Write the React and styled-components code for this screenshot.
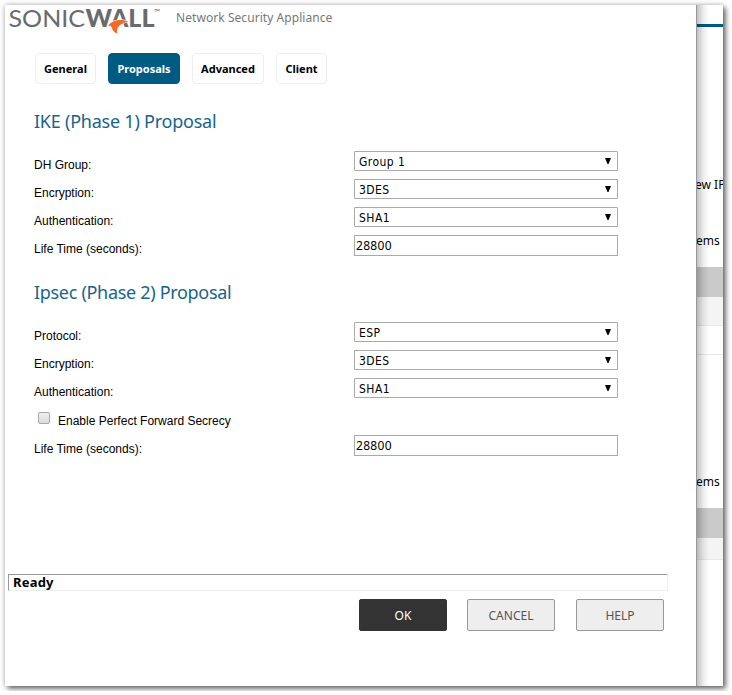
import { useState } from "react";
import styled, { createGlobalStyle } from "styled-components";

const phaseOne = [
  { label: "DH Group:", value: "Group 1" },
  { label: "Encryption:", value: "3DES" },
  { label: "Authentication:", value: "SHA1" },
];

const phaseTwo = [
  { label: "Protocol:", value: "ESP" },
  { label: "Encryption:", value: "3DES" },
  { label: "Authentication:", value: "SHA1" },
];

const tabs = [
  { name: "General", width: 61 },
  { name: "Proposals", width: 72 },
  { name: "Advanced", width: 72 },
  { name: "Client", width: 51 },
];

function Logo() {
  return (
    <LogoSvg viewBox="0 0 152 28" role="img" aria-label="SonicWall">
      <text x="-0.5" y="22" fontSize="24" textLength="76.500" lengthAdjust="spacingAndGlyphs">SONIC</text>
      <text x="76.500" y="22" fontSize="24" fontWeight="900" textLength="69" lengthAdjust="spacingAndGlyphs">WALL</text>
      <text x="145" y="9.500" fontSize="8">™</text>
      {/* orange swoosh across the A */}
      <path d="M119.500 16.500C112 13.500 103 15 99 20.800C101.500 20.300 102.500 21 102.700 22.500C103.200 25.500 105.500 27.500 108.500 28.700C106.500 22.500 111 18.500 119.500 16.500Z" fill="#f26b28" stroke="#fff" strokeWidth="1.200" paintOrder="stroke" />
    </LogoSvg>
  );
}

function SelectRow({ label, value }) {
  return (
    <Row>
      <Label>{label}</Label>
      <Select>
        <span>{value}</span>
        <Arrow viewBox="0 0 6 6"><path d="M0 0H6L3.500 6H2.500Z" /></Arrow>
      </Select>
    </Row>
  );
}

function LifeTime() {
  const [seconds, setSeconds] = useState("28800");
  return (
    <Row>
      <Label>Life Time (seconds):</Label>
      <Input value={seconds} onChange={(e) => setSeconds(e.target.value)} />
    </Row>
  );
}

function App() {
  const [active, setActive] = useState("Proposals");

  return (
    <>
      <GlobalStyle />
      <Window>
        <Dialog>
          <Header>
            <Logo />
            <Product>Network Security Appliance</Product>
          </Header>

          <TabBar>
            {tabs.map((tab) => (
              <Tab key={tab.name} $width={tab.width} $active={tab.name === active} onClick={() => setActive(tab.name)}>
                {tab.name}
              </Tab>
            ))}
          </TabBar>

          <Section>
            <Title $spacing="-0.23px">IKE (Phase 1) Proposal</Title>
            {phaseOne.map((row) => <SelectRow key={row.label} {...row} />)}
            <LifeTime />
          </Section>

          <Section>
            <Title $spacing="-0.31px">Ipsec (Phase 2) Proposal</Title>
            {phaseTwo.map((row) => <SelectRow key={row.label} {...row} />)}
            <CheckRow>
              <Checkbox />
              <span>Enable Perfect Forward Secrecy</span>
            </CheckRow>
            <LifeTime />
          </Section>

          <Status>Ready</Status>
          <Buttons>
            <Button $dark>OK</Button>
            <Button>CANCEL</Button>
            <Button>HELP</Button>
          </Buttons>
        </Dialog>

        {/* the strip of the parent page that stays visible */}
        <Parent>
          <Strip $height={19} />
          <Strip $height={3} $color="#005b82" />
          <Strip $height={148} />
          <Strip $height={20} $shift={-2}>ew IP</Strip>
          <Strip $height={36} />
          <Strip $height={20} $shift={-1}>ems</Strip>
          <Strip $height={16} />
          <Strip $height={30} $color="#cacaca" />
          <Strip $height={29} $color="#f4f4f4" $line />
          <Strip $height={29} $line />
          <Strip $height={117} />
          <Strip $height={20} $shift={-1}>ems</Strip>
          <Strip $height={16} />
          <Strip $height={30} $color="#cacaca" />
          <Strip $height={22} $color="#f4f4f4" $line />
          <Shade />
        </Parent>
      </Window>
    </>
  );
}
export default App;

const GlobalStyle = createGlobalStyle`
  * {
    box-sizing: border-box;
  }
  body {
    margin: 0;
    background: #fff;
    font-family: "Noto Sans", sans-serif;
    font-size: 12px;
    color: #000;
  }
`;

const Window = styled.div`
  display: flex;
  width: 718px;
  height: 681px;
  margin: 5px;
  background: #fff;
  box-shadow: 3px 3px 5px rgba(0, 0, 0, 0.5), 0 0 5px rgba(0, 0, 0, 0.3);
`;

const Dialog = styled.main`
  width: 692px;
  flex: none;
  border-right: 1px solid #989898;
`;

const Header = styled.header`
  display: flex;
  height: 48px;
  padding-left: 4px;
`;

const LogoSvg = styled.svg`
  width: 152px;
  height: 28px;
  overflow: visible;
  fill: #696b6e;
  font-family: Lato, sans-serif;
`;

const Product = styled.div`
  margin-left: 15px;
  line-height: 25px;
  font-size: 12px;
  letter-spacing: 0.06px;
  color: #777;
  white-space: nowrap;
`;

const TabBar = styled.nav`
  display: flex;
  gap: 12px;
  height: 31px;
  padding-left: 30px;
`;

const Tab = styled.button`
  width: ${(p) => p.$width}px;
  padding: 0;
  border: 1px solid ${(p) => (p.$active ? "#005b82" : "#eee")};
  border-radius: 4px;
  background: ${(p) => (p.$active ? "#005b82" : "#fff")};
  color: ${(p) => (p.$active ? "#fff" : "#000")};
  font: bold 11px "Noto Sans", sans-serif;
`;

const Section = styled.section`
  padding-left: 29px;
`;

const Title = styled.h2`
  height: 59px;
  margin: 0;
  padding-top: 20px;
  line-height: 26px;
  font-size: 18px;
  font-weight: 400;
  letter-spacing: ${(p) => p.$spacing};
  color: #18648a;

  ${TabBar} + ${Section} & {
    height: 63px;
    padding-top: 24px;
  }
`;

const Row = styled.div`
  display: flex;
  height: 28px;
  padding-top: 4px;
`;

const Label = styled.label`
  width: 320px;
  padding-top: 7px;
  font: 12px/14px "Liberation Sans", sans-serif;
`;

const Select = styled.div`
  display: flex;
  align-items: center;
  justify-content: space-between;
  width: 264px;
  height: 20px;
  padding: 0 6px 0 4px;
  border: 1px solid #a9a9a9;
  border-radius: 1px;
  font: 12px/18px "DejaVu Sans Condensed", "DejaVu Sans", sans-serif;
  letter-spacing: 0.45px;

  span {
    padding-top: 1px;
  }
`;

const Arrow = styled.svg`
  width: 6px;
  height: 6px;
`;

const Input = styled.input`
  width: 264px;
  height: 21px;
  padding: 0 1px;
  border: 1px solid #a9a9a9;
  outline: 0;
  font: 12px "Noto Sans", sans-serif;
  letter-spacing: 0.3px;
`;

const CheckRow = styled.label`
  display: flex;
  height: 29px;
  padding: 10px 0 0 4px;
  font: 12px/18px "Liberation Sans", sans-serif;
`;

const Checkbox = styled.input.attrs({ type: "checkbox" })`
  appearance: none;
  width: 12px;
  height: 12px;
  margin: 0 8px 0 0;
  border: 1px solid #a9a9a9;
  border-radius: 2px;
  background: linear-gradient(#eee, #dcdcdc);
`;

const Status = styled.div`
  width: 660px;
  height: 17px;
  margin: 115px 0 0 3px;
  padding-left: 4px;
  border: 1px solid;
  border-color: #999 #eee #eee #999;
  line-height: 15px;
  font-size: 13px;
  font-weight: 700;
  letter-spacing: 0.2px;
`;

const Buttons = styled.div`
  display: flex;
  gap: 20px;
  padding: 8px 0 0 354px;
`;

const Button = styled.button`
  width: 88px;
  height: 32px;
  padding: 0;
  border: 1px solid ${(p) => (p.$dark ? "#333" : "#999")};
  border-radius: 2px;
  background: ${(p) => (p.$dark ? "#333" : "#eee")};
  color: ${(p) => (p.$dark ? "#fff" : "#555")};
  font: 12px "Noto Sans", sans-serif;

  &:last-child {
    margin-left: 1px;
  }
`;

const Parent = styled.aside`
  position: relative;
  width: 26px;
  overflow: hidden;
`;

const Strip = styled.div`
  height: ${(p) => p.$height}px;
  border-bottom: ${(p) => (p.$line ? "1px solid #e8e8e8" : "0")};
  background: ${(p) => p.$color || "transparent"};
  text-indent: ${(p) => p.$shift || 0}px;
  line-height: 20px;
  white-space: nowrap;
`;

/* shadow the dialog casts over the page behind it */
const Shade = styled.div`
  position: absolute;
  inset: 0 auto 0 0;
  width: 12px;
  background: linear-gradient(to right, rgba(0, 0, 0, 0.24), rgba(0, 0, 0, 0.07) 55%, transparent);
`;
